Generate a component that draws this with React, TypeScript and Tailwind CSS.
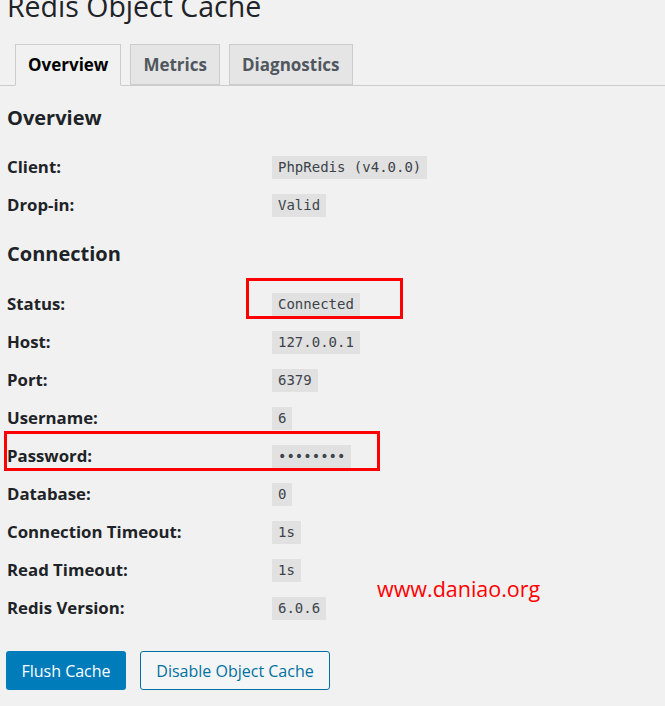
const sans = 'font-["Open_Sans","Noto_Sans",sans-serif]';
const mono = 'font-["DejaVu_Sans_Mono","Liberation_Mono",monospace]';

type Row = { label: string; value: string; mark?: 'status' | 'password' };

const overview: Row[] = [
  { label: 'Client:', value: 'PhpRedis (v4.0.0)' },
  { label: 'Drop-in:', value: 'Valid' },
];

const connection: Row[] = [
  { label: 'Status:', value: 'Connected', mark: 'status' },
  { label: 'Host:', value: '127.0.0.1' },
  { label: 'Port:', value: '6379' },
  { label: 'Username:', value: '6' },
  { label: 'Password:', value: '••••••••', mark: 'password' },
  { label: 'Database:', value: '0' },
  { label: 'Connection Timeout:', value: '1s' },
  { label: 'Read Timeout:', value: '1s' },
  { label: 'Redis Version:', value: '6.0.6' },
];

function InfoRow({ row }: { row: Row }) {
  return (
    <div className="relative flex items-center h-[38px]">
      <div className="w-[272px] pl-[7px] text-[16.8px] font-bold text-[#1d2327]">{row.label}</div>
      <code className={`${mono} bg-[#e1e1e1] px-[6px] h-[23px] leading-[23px] text-[14px] text-[#3c434a]`}>
        {row.value}
      </code>
      {row.mark === 'status' && (
        <div className="absolute left-[246px] top-[-7px] w-[157px] h-[41px] border-[3px] border-[#ff0000]" />
      )}
      {row.mark === 'password' && (
        <div className="absolute left-[4px] top-[-6px] w-[376px] h-[40px] border-[3px] border-[#ff0000]" />
      )}
    </div>
  );
}

export default function App() {
  const tabs = ['Overview', 'Metrics', 'Diagnostics'];
  return (
    <div className={`${sans} relative w-[665px] h-[706px] overflow-hidden bg-[#f1f1f1] text-[#1d2327]`}>
      <h1 className="pl-[7px] mt-[-12px] text-[28.5px] leading-[36px] font-normal text-[#1d2327]">Redis Object Cache</h1>

      {/* tabs */}
      <div className="mt-[20px] flex items-end gap-[9px] pl-[15px] border-b border-[#cccccc] h-[42px]">
        {tabs.map((t, i) => (
          <div
            key={t}
            className={`h-[41px] px-[12px] flex items-center border border-[#cccccc] text-[17px] font-bold ${
              i === 0
                ? 'bg-[#f1f1f1] text-black border-b-[#f1f1f1] mb-[-1px] h-[42px]'
                : 'bg-[#e5e5e5] text-[#50575e]'
            }`}
          >
            {t}
          </div>
        ))}
      </div>

      <h2 className="pl-[7px] mt-[17px] text-[20px] leading-[30px] font-bold">Overview</h2>
      <div className="mt-[15px]">
        {overview.map(r => (
          <InfoRow key={r.label} row={r} />
        ))}
      </div>

      <h2 className="pl-[7px] mt-[15px] text-[20px] leading-[30px] font-bold">Connection</h2>
      <div className="mt-[16px]">
        {connection.map(r => (
          <InfoRow key={r.label} row={r} />
        ))}
      </div>

      <div className="mt-[24px] pl-[6px] flex gap-[14px]">
        <button className="h-[39px] w-[120px] rounded-[3px] bg-[#007cba] text-white text-[16px]">Flush Cache</button>
        <button className="h-[39px] w-[190px] rounded-[3px] border border-[#0071a1] bg-[#f3f5f6] text-[#0071a1] text-[16px]">
          Disable Object Cache
        </button>
      </div>

      <div className="absolute left-[377px] top-[573px] text-[21.5px] text-[#ff0000]">
        www.daniao.org
      </div>
    </div>
  );
}
